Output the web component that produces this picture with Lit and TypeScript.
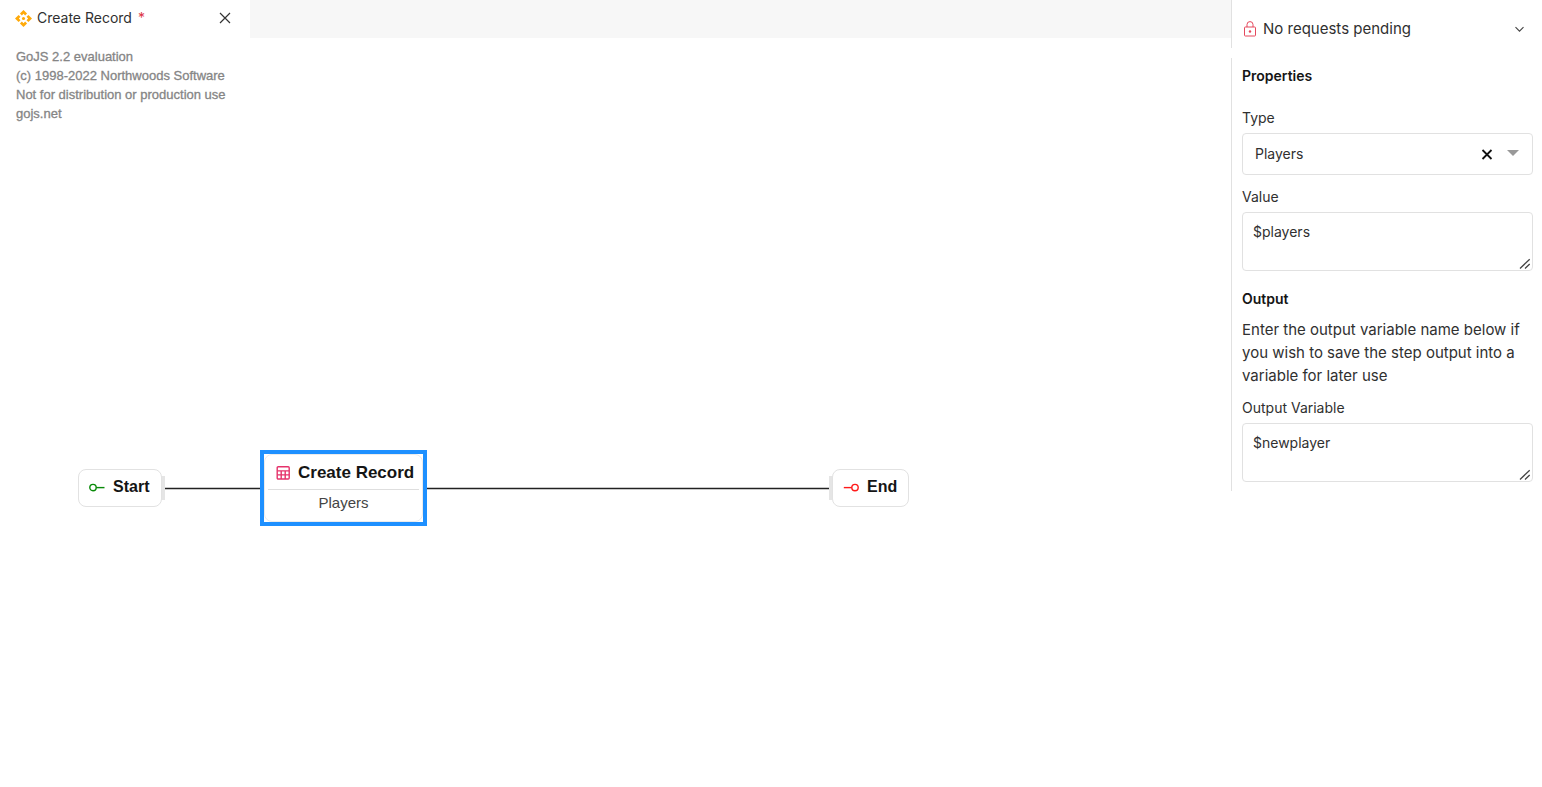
import { LitElement, html, css, svg } from "lit";
import { customElement, property, state } from "lit/decorators.js";

@customElement("flow-canvas")
export class FlowCanvas extends LitElement {
  static styles = css`
    :host {
      display: block;
      position: relative;
      flex: 1;
      overflow: hidden;
      font-family: "Liberation Sans", Arial, sans-serif;
    }
    .notice {
      margin: 0;
      padding: 9px 16px;
      font-size: 13px;
      line-height: 19px;
      color: #858585;
      -webkit-text-stroke: 0.3px #858585;
    }
    .links {
      position: absolute;
      left: 0;
      top: 0;
      width: 100%;
      height: 100%;
    }
    .node {
      position: absolute;
      box-sizing: border-box;
      background: #fff;
      border: 1px solid #e2e2e2;
      border-radius: 8px;
      font-size: 16px;
      line-height: 20px;
      font-weight: bold;
      color: #151515;
    }
    .terminal {
      display: flex;
      align-items: center;
      height: 38px;
      padding: 0 10px 2px;
      gap: 7px;
    }
    .start { left: 78px; top: 431px; width: 84px; }
    .end { left: 832px; top: 431px; width: 77px; }
    .port {
      position: absolute;
      top: 438px;
      width: 4px;
      height: 24px;
      background: #e5e5e5;
    }
    .port-out { left: 161px; }
    .port-in { left: 829px; }
    .selection {
      position: absolute;
      left: 260px;
      top: 412px;
      box-sizing: border-box;
      width: 167px;
      height: 76px;
      border: 4px solid #1e90ff;
      background: #fff;
    }
    .step {
      position: static;
      height: 68px;
      padding: 6px 3px;
      border-color: #ebebeb;
    }
    .title {
      display: flex;
      align-items: center;
      gap: 8px;
      box-sizing: border-box;
      height: 28px;
      padding: 0 8px 5px;
      font-size: 17px;
      white-space: nowrap;
    }
    .detail {
      border-top: 1px solid #dedede;
      padding-top: 3px;
      text-align: center;
      font-size: 15px;
      font-weight: normal;
      color: #444;
    }
    svg { flex: none; }
  `;

  render() {
    return html`
      <p class="notice">
        GoJS 2.2 evaluation<br />(c) 1998-2022 Northwoods Software<br />Not for
        distribution or production use<br />gojs.net
      </p>
      <svg class="links" aria-hidden="true" fill="none">
        ${svg`<path d="M165 450.5H260M427 450.5H829" stroke="#222" stroke-width="1.3"/>`}
      </svg>
      <div class="port port-out"></div>
      <div class="port port-in"></div>
      <div class="node terminal start">
        <svg width="17" height="12" viewBox="0 0 17 12" fill="none" stroke="#098a09" stroke-width="1.4">
          <circle cx="4" cy="6.6" r="3.2" /><path d="M7.2 6.6H15.5" />
        </svg>
        <span>Start</span>
      </div>
      <div class="selection">
        <div class="node step">
          <div class="title">
            <svg width="14" height="14" viewBox="0 0 14 14" fill="none" stroke="#e5326b" stroke-width="1.4">
              <rect x="1.2" y=".8" width="12" height="12.2" rx="1" />
              <path d="M1.2 4.9H13.2M1.2 8.9H13.2M5.2 4.9V13M9.2 4.9V13" />
            </svg>
            <span>Create Record</span>
          </div>
          <div class="detail">Players</div>
        </div>
      </div>
      <div class="node terminal end">
        <svg width="17" height="12" viewBox="0 0 17 12" fill="none" stroke="#ff1a1a" stroke-width="1.4">
          <circle cx="12" cy="6.6" r="3.2" /><path d="M.8 6.6H8.8" />
        </svg>
        <span>End</span>
      </div>
    `;
  }
}

@customElement("properties-panel")
export class PropertiesPanel extends LitElement {
  @property() type = "Players";
  @property() value = "$players";
  @property() output = "$newplayer";

  static styles = css`
    :host {
      display: block;
      color: #303030;
    }
    .requests {
      box-sizing: border-box;
      display: flex;
      align-items: center;
      width: 100%;
      height: 48px;
      padding: 10px 17px 0 12px;
      gap: 7px;
      border: 0;
      border-left: 1px solid #e1e1e1;
      background: #fff;
      color: inherit;
      font: 15px/20px Inter, sans-serif;
      text-align: left;
    }
    .requests span { flex: 1; }
    .form {
      margin-top: 10px;
      padding: 8px 9px 9px 10px;
      border-left: 1px solid #e1e1e1;
    }
    h2 {
      margin: 0;
      font-size: 14px;
      line-height: 20px;
      font-weight: 600;
      color: #151515;
    }
    label {
      display: block;
      font-size: 14px;
      line-height: 20px;
      margin-bottom: 5px;
    }
    .properties { margin-bottom: 22px; }
    .field { position: relative; margin-bottom: 12px; }
    .last { margin-bottom: 0; }
    .output { margin-top: 18px; }
    .help {
      margin: 9px 0 11px;
      font-size: 15px;
      line-height: 23px;
    }
    select,
    textarea {
      box-sizing: border-box;
      display: block;
      width: 100%;
      margin: 0;
      border: 1px solid #e1e1e1;
      border-radius: 4px;
      background: #fff;
      color: #303030;
      font: 14px/20px Inter, sans-serif;
      outline: none;
    }
    select {
      appearance: none;
      height: 42px;
      padding: 0 70px 0 12px;
    }
    textarea {
      height: 59px;
      padding: 9px 10px;
      resize: vertical;
    }
    textarea::-webkit-resizer {
      background: url("data:image/svg+xml,%3Csvg xmlns='http://www.w3.org/2000/svg' width='15' height='15' stroke='%23444' stroke-width='1.3'%3E%3Cpath d='M3 13.5L12.7 4.2M8 13.5L12.7 9'/%3E%3C/svg%3E") no-repeat;
    }
    .clear {
      position: absolute;
      right: 40px;
      bottom: 15px;
      display: flex;
      padding: 0;
      border: 0;
      background: none;
    }
    .arrow {
      position: absolute;
      right: 14px;
      bottom: 19px;
      pointer-events: none;
    }
  `;

  render() {
    return html`
      <button class="requests" type="button" aria-expanded="false">
        <svg width="12" height="16" viewBox="0 0 12 16" fill="none" stroke="#e5485d" stroke-width="1">
          <rect x=".5" y="6" width="11" height="9" rx=".8" />
          <path d="M3 6V3.6a3 3 0 0 1 6 0V6" />
          <circle cx="6" cy="10.5" r="1.2" fill="#e5485d" stroke="none" />
        </svg>
        <span>No requests pending</span>
        <svg width="11" height="8" viewBox="0 0 11 8" fill="none" stroke="#444" stroke-width="1.1">
          <path d="M1.5 2.2L5.5 6.2L9.5 2.2" />
        </svg>
      </button>
      <div class="form">
        <h2 class="properties">Properties</h2>
        <div class="field">
          <label for="type">Type</label>
          <select id="type">
            <option>${this.type}</option>
          </select>
          <button class="clear" type="button" aria-label="Clear type">
            <svg width="12" height="12" viewBox="0 0 12 12" stroke="#111" stroke-width="1.8">
              <path d="M1.5 2L10.5 11M10.5 2L1.5 11" />
            </svg>
          </button>
          <svg class="arrow" width="12" height="6" viewBox="0 0 12 6"><path d="M0 0H12L6 6Z" fill="#999" /></svg>
        </div>
        <div class="field">
          <label for="value">Value</label>
          <textarea id="value" .value=${this.value}></textarea>
        </div>
        <h2 class="output">Output</h2>
        <p class="help">
          Enter the output variable name below if you wish to save the step
          output into a variable for later use
        </p>
        <div class="field last">
          <label for="output">Output Variable</label>
          <textarea id="output" .value=${this.output}></textarea>
        </div>
      </div>
    `;
  }
}

@customElement("app-root")
export class AppRoot extends LitElement {
  @state() private recordName = "Create Record";

  static styles = css`
    :host {
      display: grid;
      grid-template-columns: minmax(0, 1fr) 311px;
      min-height: 100vh;
      background: #fff;
      font-family: Inter, sans-serif;
    }
    main {
      display: flex;
      flex-direction: column;
    }
    .tabs {
      display: flex;
      height: 38px;
      background: #f7f7f7;
    }
    .tab {
      box-sizing: border-box;
      display: flex;
      align-items: center;
      width: 250px;
      padding: 0 19px 2px 15px;
      background: #fff;
      color: #303030;
      font-size: 14px;
      line-height: 20px;
    }
    .name { margin-left: 5px; flex: 1; }
    .dirty { color: #dc3545; margin-left: 2px; }
    .close {
      display: flex;
      padding: 0;
      border: 0;
      background: none;
    }
  `;

  render() {
    return html`
      <main>
        <div class="tabs">
          <div class="tab">
            <svg width="17" height="17" viewBox="1 1 22 22" fill="#ffaa0a">
              <path d="M12 6l2.12 2.12 2.5-2.5L12 1 7.38 5.62l2.5 2.5L12 6zm-6 6l2.12-2.12-2.5-2.5L1 12l4.62 4.62 2.5-2.5L6 12zm12 0l-2.12 2.12 2.5 2.5L23 12l-4.62-4.62-2.5 2.5L18 12zm-6 6l-2.12-2.12-2.5 2.5L12 23l4.62-4.62-2.5-2.5L12 18z" />
              <circle cx="12" cy="12" r="2" />
            </svg>
            <span class="name">${this.recordName} <span class="dirty">*</span></span>
            <button class="close" type="button" aria-label="Close tab">
              <svg width="12" height="12" viewBox="0 0 12 12" stroke="#333" stroke-width="1.2">
                <path d="M1 1L11 11M11 1L1 11" />
              </svg>
            </button>
          </div>
        </div>
        <flow-canvas></flow-canvas>
      </main>
      <properties-panel></properties-panel>
    `;
  }
}
